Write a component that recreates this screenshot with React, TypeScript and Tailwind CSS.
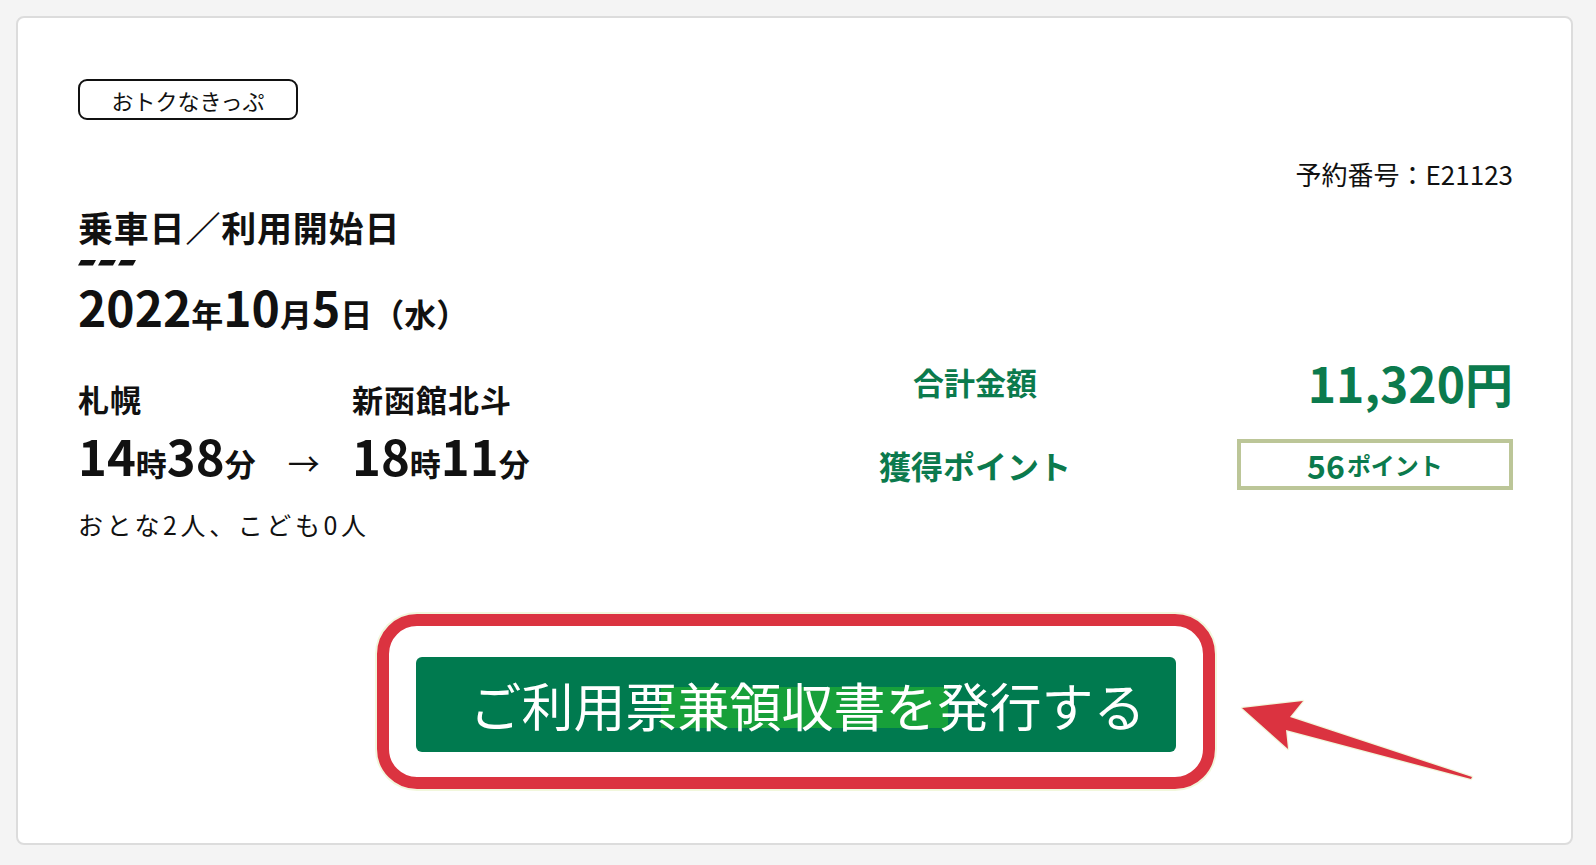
import React from 'react';

const FONT = { fontFamily: '"Noto Sans CJK JP", "Noto Sans", sans-serif' };

const Dashes: React.FC = () => (
    <svg width="60" height="6" viewBox="0 0 60 6" className="block">
        {[0, 1, 2].map((i) => {
            const x = i * 20;
            return <polygon key={i} points={`${x + 3},0 ${x + 18},0 ${x + 15},5.5 ${x},5.5`} fill="#111" />;
        })}
    </svg>
);

const Arrow: React.FC = () => (
    <svg
        width="260"
        height="100"
        viewBox="0 0 260 100"
        className="absolute left-[1212px] top-[672px] pointer-events-none"
    >
        <polygon
            points="12,18 73,11 60,27 242,87 241,89 56,40 58,59"
            fill="#db3340"
            stroke="#f1f7dc"
            strokeWidth="2.5"
            strokeLinejoin="round"
            style={{ paintOrder: 'stroke' }}
        />
    </svg>
);

const TimeText: React.FC<{ h: string; m: string }> = ({ h, m }) => (
    <span className="font-bold text-[#111]">
        <span className="text-[49px]">{h}</span>
        <span className="text-[31px]">時</span>
        <span className="text-[49px]">{m}</span>
        <span className="text-[31px]">分</span>
    </span>
);

const App: React.FC = () => {
    return (
        <div className="min-h-[865px] bg-[#f4f4f4] p-4" style={FONT}>
            <div className="relative w-[1557px] bg-white border-2 border-[#dcdcdc] rounded-lg pt-[61px] pl-[60px] pr-[58px] pb-[54px]">
                {/* ticket type tag */}
                <div className="w-[220px] h-[41px] border-2 border-[#111] rounded-[9px] flex items-center justify-center text-[22px] leading-none text-[#111]">
                    おトクなきっぷ
                </div>

                <div className="mt-[38px] text-right text-[26px] leading-[32px] text-[#111]">
                    予約番号：E21123
                </div>

                <div className="mt-[17px] flex justify-between">
                    {/* left: ride info */}
                    <div>
                        <h2 className="text-[35px] leading-[40px] font-bold tracking-[0.8px] text-[#111]">乗車日／利用開始日</h2>
                        <div className="mt-[13px]">
                            <Dashes />
                        </div>
                        <div className="mt-[15px] leading-[50px] font-bold text-[#111] whitespace-nowrap">
                            <span className="text-[48px]">2022</span>
                            <span className="text-[32px]">年</span>
                            <span className="text-[48px]">10</span>
                            <span className="text-[32px]">月</span>
                            <span className="text-[48px]">5</span>
                            <span className="text-[32px]">日（水）</span>
                        </div>

                        <div className="mt-[36px] flex">
                            <div className="w-[274px] text-[31px] leading-[36px] font-bold tracking-[1px] text-[#111]">札幌</div>
                            <div className="text-[31px] leading-[36px] font-bold tracking-[1px] text-[#111]">新函館北斗</div>
                        </div>
                        <div className="mt-[13px] flex items-baseline leading-[50px] whitespace-nowrap">
                            <div className="w-[274px] flex items-baseline">
                                <TimeText h="14" m="38" />
                                <span className="ml-[32px] text-[32px] text-[#111]">→</span>
                            </div>
                            <TimeText h="18" m="11" />
                        </div>
                        <div className="mt-[15px] text-[25px] leading-[30px] tracking-[3.6px] text-[#111]">おとな2人、こども0人</div>
                    </div>

                    {/* right: totals */}
                    <div className="pt-[147px]">
                        <div className="grid grid-cols-[200px_162px_276px] items-center">
                            <div className="text-center text-[31px] leading-[40px] font-bold text-[#0b7a4d]">合計金額</div>
                            <div />
                            <div className="text-right text-[48px] leading-[56px] font-bold text-[#0b7a4d]">11,320円</div>
                            <div className="mt-[29px] text-center text-[32px] leading-[40px] font-bold text-[#0b7a4d]">獲得ポイント</div>
                            <div />
                            <div className="mt-[29px] h-[51px] border-4 border-[#bcc698] flex items-center justify-center font-bold text-[#0b7a4d]">
                                <span className="text-[32px] leading-none">56</span>
                                <span className="text-[24px] leading-none ml-[2px]">ポイント</span>
                            </div>
                        </div>
                    </div>
                </div>

                {/* issue button, highlighted */}
                <div className="mt-[75px] flex justify-center">
                    <div className="border-[12px] border-[#db3340] rounded-[40px] pt-[31px] pb-[25px] px-[27px] shadow-[0_0_0_2px_#f1f7dc]">
                        <button className="relative w-[760px] h-[95px] rounded-[6px] bg-[#007a4f] flex items-center pl-[54px] text-[52px] leading-none text-white">
                            <span className="absolute left-[245px] top-[30px] w-[287px] h-[41px] bg-[#17a03a]" />
                            <span className="relative">ご利用票兼領収書を発行する</span>
                        </button>
                    </div>
                </div>

                <Arrow />
            </div>
        </div>
    );
};

export default App;
